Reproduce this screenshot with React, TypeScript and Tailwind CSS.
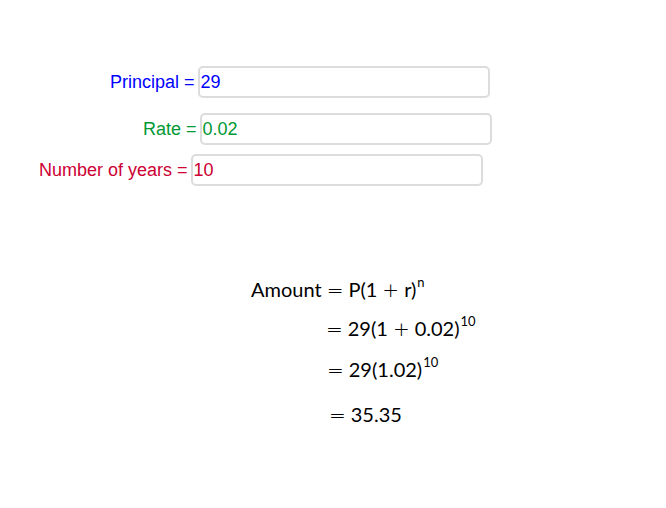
import React from "react";

const labelFont = { fontFamily: '"Liberation Sans", Arial, sans-serif' };
const mathFont = { fontFamily: 'Lato, "Noto Sans", sans-serif' };
const opFont = { fontFamily: '"DejaVu Sans", sans-serif' };

function Field({ label, value, color, className }: { label: string; value: string; color: string; className: string }) {
  return (
    <div className={`flex items-center gap-[3px] ${className}`} style={labelFont}>
      <span className={`text-[18px] leading-none ${color}`}>{label}</span>
      <div className="flex h-[32px] w-[292px] items-center rounded-[5px] border-2 border-[#dcdcdc] px-[1px]">
        <span className={`text-[18px] leading-none ${color}`}>{value}</span>
      </div>
    </div>
  );
}

// math operators drawn wider like the LaTeX renderer
const Op = ({ c }: { c: string }) => (
  <span className="mx-[5px] font-light" style={opFont}>
    {c}
  </span>
);
const Sup = ({ c }: { c: string }) => <span className="ml-[1px] align-[10px] text-[13px]">{c}</span>;

export default function App() {
  return (
    <div className="flex h-[508px] w-[666px] flex-col overflow-hidden bg-white pt-[66px]">
      <Field label="Principal =" value="29" color="text-[#0000ff]" className="ml-[110px]" />
      <Field label="Rate =" value="0.02" color="text-[#009933]" className="ml-[143px] mt-[15px]" />
      <Field label="Number of years =" value="10" color="text-[#cc0033]" className="ml-[39px] mt-[9px]" />

      <div className="mt-[86px] flex flex-col whitespace-nowrap text-[20px] leading-[20px] text-black" style={mathFont}>
        <div className="ml-[251px] h-[20px]">
          Amount<Op c="=" />P(1<Op c="+" />r)<Sup c="n" />
        </div>
        <div className="ml-[321px] mt-[19px] h-[20px]">
          <Op c="=" />29(1<Op c="+" />0.02)<Sup c="10" />
        </div>
        <div className="ml-[322px] mt-[21px] h-[20px]">
          <Op c="=" />29(1.02)<Sup c="10" />
        </div>
        <div className="ml-[324px] mt-[32px] h-[20px]">
          <Op c="=" />35.35
        </div>
      </div>
    </div>
  );
}
